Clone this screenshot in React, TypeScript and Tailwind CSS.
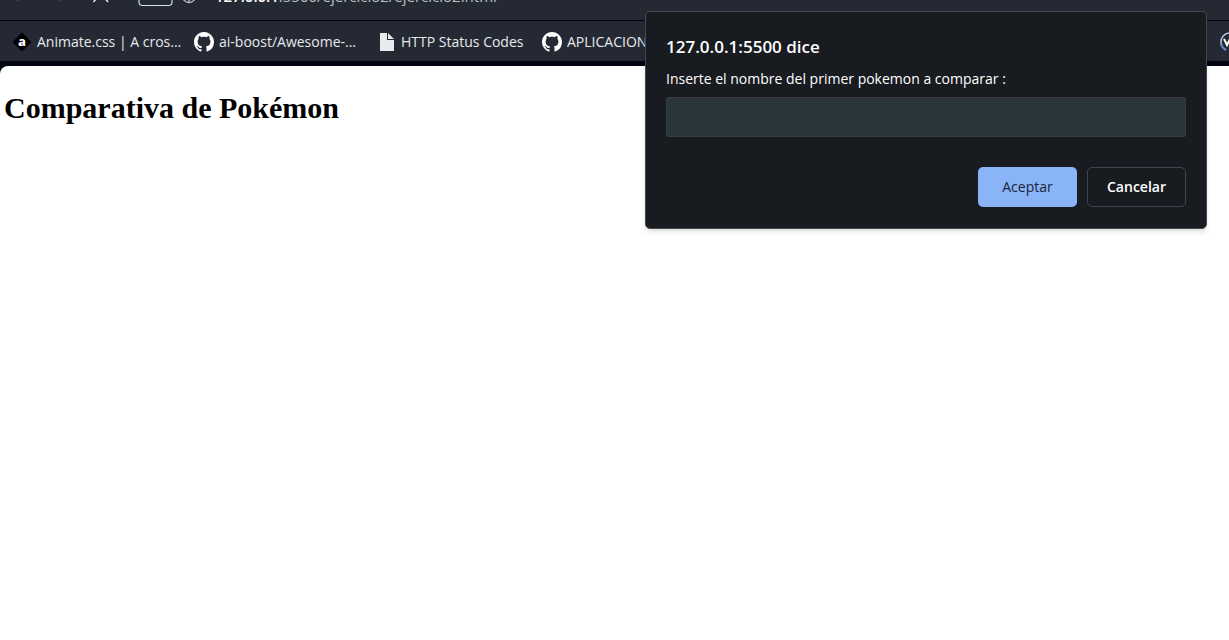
import type { ReactNode } from "react";

function GithubIcon() {
  return (
    <svg viewBox="0 0 16 16" className="size-5 shrink-0" fill="#fff" aria-hidden="true">
      <path d="M8 0C3.58 0 0 3.58 0 8c0 3.54 2.29 6.53 5.47 7.59.4.07.55-.17.55-.38 0-.19-.01-.82-.01-1.49-2.01.37-2.53-.49-2.69-.94-.09-.23-.48-.94-.82-1.13-.28-.15-.68-.52-.01-.53.63-.01 1.08.58 1.23.82.72 1.21 1.87.87 2.33.66.07-.52.28-.87.51-1.07-1.78-.2-3.64-.89-3.64-3.95 0-.87.31-1.59.82-2.15-.08-.2-.36-1.02.08-2.12 0 0 .67-.21 2.2.82.64-.18 1.32-.27 2-.27s1.36.09 2 .27c1.53-1.04 2.2-.82 2.2-.82.44 1.1.16 1.92.08 2.12.51.56.82 1.27.82 2.15 0 3.07-1.87 3.75-3.65 3.95.29.25.54.73.54 1.48 0 1.07-.01 1.93-.01 2.2 0 .21.15.46.55.38A8.01 8.01 0 0 0 16 8c0-4.42-3.58-8-8-8z" />
    </svg>
  );
}

function AnimateIcon() {
  return (
    <span className="relative flex size-5 shrink-0 items-center justify-center">
      <svg viewBox="0 0 20 20" className="absolute inset-0 size-5" aria-hidden="true">
        <path d="M10 0.5 19.5 10 10 19.5 0.5 10Z" fill="#000" />
      </svg>
      <span className="relative pb-0.5 font-['Noto_Sans',sans-serif] text-[13px] leading-4 font-extrabold text-white">a</span>
    </span>
  );
}

function FileIcon() {
  return (
    <svg viewBox="0 0 20 20" className="size-5 shrink-0" fill="#e8eaed" aria-hidden="true">
      <path d="M4.500 1H11v7h7v10.500a.5.5 0 0 1-.5.5h-13a.5.5 0 0 1-.5-.5v-17a.5.5 0 0 1 .5-.5Z" />
      <path d="M12 1l6 6h-6Z" />
    </svg>
  );
}

function Bookmark({ icon, children }: { icon: ReactNode; children: ReactNode }) {
  return (
    <a href="#" className="flex shrink-0 items-center gap-[5px] whitespace-nowrap">
      {icon}
      {children}
    </a>
  );
}

export default function App() {
  return (
    <div className="relative flex min-h-screen flex-col overflow-hidden bg-white font-['Open_Sans','Noto_Sans',sans-serif]">
      <header className="bg-[#010413] pb-[5px] text-sm text-[#e8eaed]">
        <div className="flex h-5 items-end overflow-hidden bg-[#252933] pl-2">
          <svg viewBox="0 0 200 20" className="h-5 w-[200px] shrink-0" fill="none" aria-hidden="true">
            <path d="M9 0h1M51 0h1" stroke="#8b909a" />
            <path d="M85.500 2l2.500-3M100 2l-2.500-3" stroke="#e8eaed" strokeWidth="1.500" />
            <path d="M131-4V2q0 3.500 3.500 3.500h26q3.500 0 3.500-3.500V-4" stroke="#d3dfdf" strokeWidth="1.200" />
            <circle cx="181" cy="-4" r="6.500" stroke="#c4c8ce" strokeWidth="1.300" />
            <path d="M177-1q4 2 8 0M181-4v6.500" stroke="#c4c8ce" />
          </svg>
          <p className="shrink-0 pb-[14px] pl-[7px] text-[15px] leading-5 whitespace-nowrap text-[#b9c2c2]">
            <span className="font-semibold text-white">127.0.0.1</span>:5500/ejercicio2/ejercicio2.html
          </p>
        </div>
        <nav aria-label="Marcadores" className="mt-px flex h-10 items-center justify-between overflow-hidden bg-[#252933] pt-px pl-3">
          <div className="flex min-w-0 items-center gap-[15px] overflow-hidden">
            <Bookmark icon={<AnimateIcon />}>
              <span className="w-[142px]">Animate.css | A cros...</span>
            </Bookmark>
            <Bookmark icon={<GithubIcon />}>
              <span className="w-[142px]">ai-boost/Awesome-...</span>
            </Bookmark>
            <Bookmark icon={<FileIcon />}>
              <span className="w-[126px]">HTTP Status Codes</span>
            </Bookmark>
            <Bookmark icon={<GithubIcon />}>APLICACIONES</Bookmark>
          </div>
          <a href="#" aria-label="Marcador" className="w-[9px] shrink-0 overflow-hidden">
            <svg viewBox="0 0 20 20" className="size-5" fill="none" aria-hidden="true">
              <path d="M9 1a9 9 0 0 0-8 9q0 5 5 8" stroke="#b8c9e8" strokeWidth="1.500" />
              <path d="M1 12q1 4 5 6" stroke="#6388c9" strokeWidth="1.500" />
              <path d="M4 7l3 6 3-6 3 6 3-6" stroke="#fff" strokeWidth="2" />
            </svg>
          </a>
        </nav>
      </header>

      <div className="-mt-1 bg-[#010413] pt-1">
        <main className="rounded-tl-lg bg-white px-1 pt-6">
          <h1 className="font-['Liberation_Serif',serif] text-[30px] leading-9 font-bold text-black">Comparativa de Pokémon</h1>
        </main>
      </div>

      <form
        role="dialog"
        aria-labelledby="dialog-title"
        onSubmit={(event) => event.preventDefault()}
        className="absolute top-[11px] right-[22px] w-[562px] rounded-[5px] border border-[#46484b] bg-[#181b1f] px-5 pt-[21px] pb-[21px] text-white shadow-md"
      >
        <h2 id="dialog-title" className="text-[17px] leading-7 font-semibold">127.0.0.1:5500 dice</h2>
        <label htmlFor="pokemon" className="mt-[6px] block text-sm leading-6">Inserte el nombre del primer pokemon a comparar :</label>
        <input
          id="pokemon"
          type="text"
          className="mt-[6px] block h-10 w-full rounded-[2px] border border-[#363c41] bg-[#2a343b] px-3 text-sm outline-none"
        />
        <div className="mt-[30px] flex justify-end gap-[10px] text-sm">
          <button type="submit" className="h-10 w-[99px] rounded-[5px] bg-[#8ab4f8] font-medium text-[#202438]">Aceptar</button>
          <button type="button" className="h-10 w-[99px] rounded-[5px] border border-[#404550] font-semibold">Cancelar</button>
        </div>
      </form>
    </div>
  );
}
